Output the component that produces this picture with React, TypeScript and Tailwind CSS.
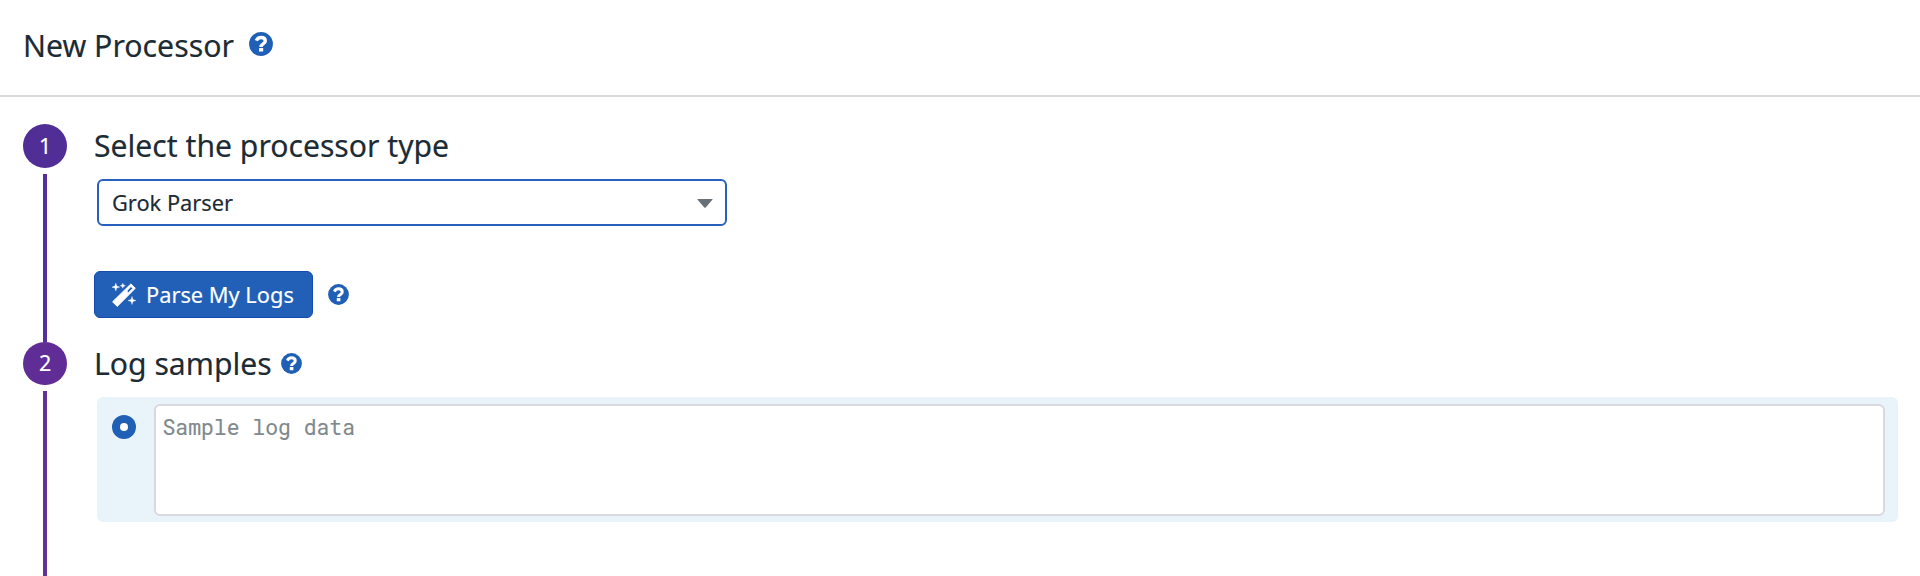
import React from "react";

function Help({ className }: { className: string }) {
  return (
    <svg viewBox="0 0 24 24" className={className} aria-hidden="true">
      <circle cx="12" cy="12" r="11.9" fill="#1f5fb5" />
      <path d="M7.3 8.7C8.2 6.6 9.7 5.5 12 5.5c2.5 0 4.3 1.3 4.3 3.5 0 3-4.3 2.8-4.3 5.9" fill="none" stroke="#fff" strokeWidth="3.4" />
      <rect x="10" y="16" width="4.2" height="3.6" rx=".4" fill="#fff" />
    </svg>
  );
}

function Wand() {
  return (
    <svg viewBox="0 0 24 24" className="h-6 w-6 shrink-0" fill="#fff" aria-hidden="true">
      <path fillRule="evenodd" d="M18.9.9 23.3 5.3 5.2 23.4.6 18.8ZM18.9 3.4 14.7 8.1l1.7 1.7 4.5-4.4Z" stroke="#fff" strokeWidth="1" strokeLinejoin="round" />
      <path d="M3.8.1 4.8 3.1 7.8 4.1 4.8 5.1 3.8 8.1 2.8 5.1-.2 4.1 2.8 3.1ZM10.8.2l.8 1.7 1.8.8-1.8.8-.8 1.8-.8-1.8-1.8-.8 1.8-.8ZM20 13.4l1 3.1 3.1 1-3.1 1-1 3.1-1-3.1-3.1-1 3.1-1Z" stroke="#fff" strokeWidth=".3" />
    </svg>
  );
}

export default function App() {
  return (
    <div className="h-[576px] overflow-hidden bg-white font-['Noto_Sans',sans-serif] text-[#1c2b34] [-webkit-text-stroke:0.15px]">
      <header className="flex h-[97px] items-start border-b-2 border-[#d9d9de] pt-6 pl-[23px]">
        <h1 className="w-[226px] text-[30.25px] leading-[44px] whitespace-nowrap">New Processor</h1>
        <Help className="mt-[7.5px] h-6 w-6" />
      </header>
      <main className="flex flex-col">
        <section className="flex h-[244.5px] pt-[27px] pl-[23px]">
          <div className="flex w-[71px] shrink-0 flex-col">
            <div className="ml-[0.4px] flex h-[43.5px] w-[43.5px] shrink-0 items-center justify-center rounded-full bg-[#512e96] text-[21.5px] text-white">1</div>
            <div className="mt-1.5 ml-5 w-1 grow bg-[#54309a]" />
          </div>
          <div>
            <h2 className="h-[55px] text-[30.15px] leading-[44px] whitespace-nowrap">Select the processor type</h2>
            <div className="ml-[3px] flex h-[47px] w-[630px] items-center justify-between rounded-md border-2 border-[#2760bf] pr-3 pl-[13px] text-[21.8px]">
              <span className="pt-0.5">Grok Parser</span>
              <svg viewBox="0 0 16 9" className="mt-px h-[9px] w-4"><path d="M1 0h14q1 0 .4.8L8.7 8.4q-.7.7-1.4 0L.6.8Q0 0 1 0Z" fill="#687177" /></svg>
            </div>
            <div className="mt-[45px] flex items-center gap-[15px]">
              <button className="flex h-[47px] w-[219px] items-center gap-2.5 rounded-md border border-[#164ab0] bg-[#2160b6] pl-[17px] text-[21.8px] whitespace-nowrap text-white">
                <Wand />
                <span className="pt-0.5">Parse My Logs</span>
              </button>
              <Help className="h-[21px] w-[21px]" />
            </div>
          </div>
        </section>
        <section className="flex h-[234.5px] pl-[23px]">
          <div className="flex w-[71px] shrink-0 flex-col">
            <div className="ml-[0.4px] flex h-[43.5px] w-[43.5px] shrink-0 items-center justify-center rounded-full bg-[#602d96] text-[21.5px] text-white">2</div>
            <div className="mt-1.5 ml-5 w-1 grow bg-[#643199]" />
          </div>
          <div>
            <div className="flex h-[55.5px] items-start">
              <h2 className="w-[187px] text-[30.15px] leading-[43px] whitespace-nowrap">Log samples</h2>
              <Help className="mt-[11px] h-[21px] w-[21px]" />
            </div>
            <div className="ml-[3px] flex h-[125px] w-[1801px] rounded-md bg-[#e8f3fa] pt-[7px] pl-[15px]">
              <div className="mt-[11px] flex h-6 w-6 items-center justify-center rounded-full bg-[#1f5fb5]">
                <div className="h-2 w-2 rounded-full bg-white" />
              </div>
              <textarea
                placeholder="Sample log data"
                className="ml-[18px] h-[112px] w-[1731px] resize-none rounded-md border-2 border-[#d8d8df] bg-white px-[6.5px] py-[6px] font-['Roboto_Mono','Liberation_Mono',monospace] text-[21.4px] leading-[30px] outline-none placeholder:text-[#7f898d]"
              />
            </div>
          </div>
        </section>
      </main>
    </div>
  );
}
